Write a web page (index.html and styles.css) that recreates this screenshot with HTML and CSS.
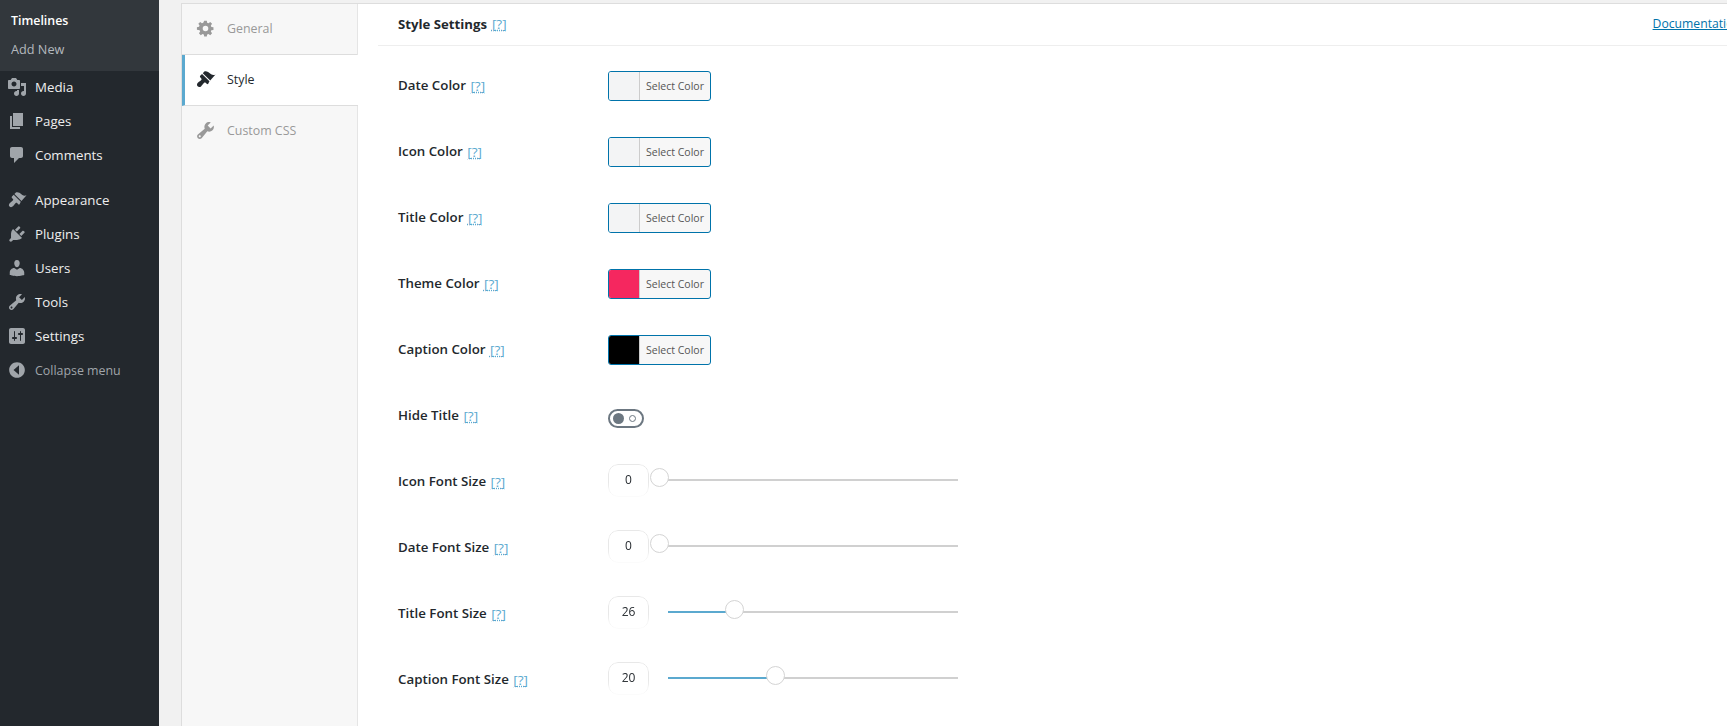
FILE: index.html
```html
<!DOCTYPE html>
<html lang="en">
<head>
    <meta charset="UTF-8">
    <meta name="viewport" content="width=device-width, initial-scale=1.0">
    <title>Style Settings</title>
    <link rel="stylesheet" href="styles.css">
</head>
<body>
    <aside class="sidebar">
        <div class="submenu">
            <a class="submenu-current">Timelines</a>
            <a class="submenu-item">Add New</a>
        </div>
        <nav class="menu">
            <a class="menu-item">
                <svg class="menu-icon" viewBox="0 0 20 20"><path d="M13 11V4c0-.55-.45-1-1-1h-1.67L9 1H5L3.67 3H2c-.55 0-1 .45-1 1v7c0 .55.45 1 1 1h10c.55 0 1-.45 1-1zM7 4.500c1.380 0 2.500 1.120 2.500 2.500S8.380 9.500 7 9.500 4.500 8.380 4.500 7 5.620 4.500 7 4.500zM14 6h5v10.500c0 1.380-1.120 2.500-2.500 2.500S14 17.880 14 16.500s1.120-2.500 2.500-2.500c.17 0 .34.02.5.05V9h-3V6zm-4 8.050V13h2v3.500c0 1.380-1.120 2.500-2.500 2.500S7 17.880 7 16.500 8.120 14 9.500 14c.17 0 .34.02.5.05z"/></svg>
                Media
            </a>
            <a class="menu-item">
                <svg class="menu-icon" viewBox="0 0 20 20"><path d="M6 15V2h10v13H6zm-1 1h8v2H3V5h2v11z"/></svg>
                Pages
            </a>
            <a class="menu-item">
                <svg class="menu-icon" viewBox="0 0 20 20"><path d="M5 2h9c1.100 0 2 .9 2 2v7c0 1.100-.9 2-2 2h-2l-5 5v-5H5c-1.100 0-2-.9-2-2V4c0-1.100.9-2 2-2z"/></svg>
                Comments
            </a>
            <a class="menu-item menu-item-gap">
                <svg class="menu-icon" viewBox="0 0 20 20"><path d="M14.480 11.060L7.410 3.990l1.500-1.500c.5-.56 2.300-.47 3.510.32 1.210.8 1.430 1.280 2.910 2.100 1.180.64 2.450 1.260 4.150.33l-.15.15-4.850 5.660zm-.71.71L6.700 4.700 4.930 6.470c-.39.39-.39 1.020 0 1.410l1.060 1.060c.39.39.39 1.030 0 1.420-.6.6-1.430 1.150-2.210 1.840-.35.31-.72.6-1.060.94-.89.88-1.200 2.400-.2 3.400s2.530.69 3.410-.2c.34-.34.63-.71.94-1.060.69-.78 1.240-1.610 1.840-2.210.39-.39 1.030-.39 1.420 0l1.060 1.060c.39.39 1.020.39 1.410 0z"/></svg>
                Appearance
            </a>
            <a class="menu-item">
                <svg class="menu-icon" viewBox="0 0 20 20"><path d="M13.110 4.360L9.870 7.600 8 5.730l3.240-3.240c.35-.34 1.050-.2 1.560.32.52.51.66 1.210.31 1.550zm-8 1.770l.91-1.120 9.010 9.010-1.190.84c-.71.71-2.630 1.160-3.820 1.160H6.140L4.900 17.260c-.59.59-1.540.59-2.120 0-.59-.58-.59-1.530 0-2.120l1.240-1.240v-3.880c0-1.130.4-3.190 1.090-3.890zm7.260 3.970l3.240-3.240c.34-.35 1.040-.21 1.550.31.52.51.66 1.210.31 1.550l-3.240 3.250z"/></svg>
                Plugins
            </a>
            <a class="menu-item">
                <svg class="menu-icon" viewBox="0 0 20 20"><path d="M10 9.250c-2.270 0-2.730-3.440-2.730-3.440C7 4.020 7.820 2 9.970 2c2.160 0 2.980 2.020 2.710 3.810 0 0-.41 3.440-2.680 3.440zm0 2.570L12.720 10c2.390 0 4.520 2.330 4.520 4.530v2.490s-3.650 1.130-7.240 1.130c-3.650 0-7.240-1.130-7.240-1.130v-2.490c0-2.250 1.940-4.480 4.470-4.480z"/></svg>
                Users
            </a>
            <a class="menu-item">
                <svg class="menu-icon" viewBox="0 0 20 20"><path d="M16.680 9.770c-1.340 1.340-3.300 1.670-4.950.99l-5.410 6.520c-.99.99-2.590.99-3.580 0s-.99-2.590 0-3.570l6.520-5.420c-.68-1.650-.35-3.610.99-4.950 1.280-1.280 3.120-1.620 4.720-1.060l-2.890 2.890 2.820 2.820 2.860-2.870c.53 1.580.18 3.390-1.080 4.650zM3.810 16.210c.4.39 1.040.39 1.430 0 .4-.4.4-1.040 0-1.430-.39-.4-1.030-.4-1.430 0-.39.39-.39 1.030 0 1.430z"/></svg>
                Tools
            </a>
            <a class="menu-item">
                <svg class="menu-icon" viewBox="0 0 20 20"><path d="M18 16V4c0-1.100-.9-2-2-2H4c-1.100 0-2 .9-2 2v12c0 1.100.9 2 2 2h12c1.100 0 2-.9 2-2zM8 11h1c.55 0 1 .45 1 1s-.45 1-1 1H8v1.500c0 .28-.22.5-.5.5s-.5-.22-.5-.5V13H6c-.55 0-1-.45-1-1s.45-1 1-1h1V5.500c0-.28.22-.5.5-.5s.5.22.5.5V11zm5-2h-1c-.55 0-1-.45-1-1s.45-1 1-1h1V5.500c0-.28.22-.5.5-.5s.5.22.5.5V7h1c.55 0 1 .45 1 1s-.45 1-1 1h-1v5.500c0 .28-.22.5-.5.5s-.5-.22-.5-.5V9z"/></svg>
                Settings
            </a>
            <a class="menu-item menu-item-collapse">
                <svg class="menu-icon" viewBox="0 0 20 20"><path d="M10 2.160c4.330 0 7.840 3.510 7.840 7.840s-3.510 7.840-7.840 7.840-7.840-3.510-7.840-7.840 3.510-7.840 7.840-7.840zM12 14.830V5.170L6.500 10z"/></svg>
                Collapse menu
            </a>
        </nav>
    </aside>

    <main class="main">
        <div class="box">
            <div class="tabs">
                <a class="tab">
                    <svg class="tab-icon" viewBox="-2 -2 24 24"><path fill-rule="evenodd" d="M8.500 1h3l.4 2.400 1.500.6 2-1.400 2.100 2.100-1.400 2 .6 1.500 2.400.4v3l-2.400.4-.6 1.500 1.400 2-2.100 2.100-2-1.400-1.500.6-.4 2.400h-3l-.4-2.400-1.500-.6-2 1.400-2.100-2.100 1.400-2-.6-1.500L.2 11.500v-3l2.400-.4.6-1.500-1.400-2 2.100-2.100 2 1.400 1.500-.6zM10 6.800a3.200 3.200 0 1 0 0 6.400 3.200 3.200 0 0 0 0-6.400z"/></svg>
                    General
                </a>
                <a class="tab tab-active">
                    <svg class="tab-icon" viewBox="0 0 20 20"><path d="M14.480 11.060L7.410 3.990l1.500-1.500c.5-.56 2.300-.47 3.510.32 1.210.8 1.430 1.280 2.910 2.100 1.180.64 2.450 1.260 4.150.33l-.15.15-4.850 5.660zm-.71.71L6.700 4.700 4.930 6.470c-.39.39-.39 1.020 0 1.410l1.060 1.060c.39.39.39 1.030 0 1.420-.6.6-1.430 1.150-2.210 1.840-.35.31-.72.6-1.060.94-.89.88-1.200 2.400-.2 3.400s2.530.69 3.410-.2c.34-.34.63-.71.94-1.060.69-.78 1.240-1.610 1.840-2.210.39-.39 1.030-.39 1.420 0l1.060 1.060c.39.39 1.020.39 1.410 0z"/></svg>
                    Style
                </a>
                <a class="tab">
                    <svg class="tab-icon" viewBox="0 0 20 20"><path d="M16.680 9.770c-1.340 1.340-3.300 1.670-4.950.99l-5.410 6.520c-.99.99-2.590.99-3.580 0s-.99-2.590 0-3.570l6.520-5.420c-.68-1.650-.35-3.610.99-4.950 1.280-1.280 3.120-1.620 4.720-1.060l-2.890 2.890 2.820 2.820 2.860-2.870c.53 1.580.18 3.390-1.080 4.650zM3.810 16.210c.4.39 1.040.39 1.430 0 .4-.4.4-1.040 0-1.430-.39-.4-1.030-.4-1.430 0-.39.39-.39 1.030 0 1.430z"/></svg>
                    Custom CSS
                </a>
            </div>

            <div class="panel">
                <div class="panel-head">
                    <span class="panel-title">Style Settings</span>
                    <a class="help">[?]</a>
                    <a class="doc-link">Documentation</a>
                </div>

                <div class="row">
                    <label class="row-label">Date Color <a class="help">[?]</a></label>
                    <div class="color-btn"><span class="swatch"></span><span class="color-text">Select Color</span></div>
                </div>
                <div class="row">
                    <label class="row-label">Icon Color <a class="help">[?]</a></label>
                    <div class="color-btn"><span class="swatch"></span><span class="color-text">Select Color</span></div>
                </div>
                <div class="row">
                    <label class="row-label">Title Color <a class="help">[?]</a></label>
                    <div class="color-btn"><span class="swatch"></span><span class="color-text">Select Color</span></div>
                </div>
                <div class="row">
                    <label class="row-label">Theme Color <a class="help">[?]</a></label>
                    <div class="color-btn"><span class="swatch swatch-theme"></span><span class="color-text">Select Color</span></div>
                </div>
                <div class="row">
                    <label class="row-label">Caption Color <a class="help">[?]</a></label>
                    <div class="color-btn"><span class="swatch swatch-caption"></span><span class="color-text">Select Color</span></div>
                </div>
                <div class="row">
                    <label class="row-label">Hide Title <a class="help">[?]</a></label>
                    <div class="toggle"><span class="toggle-knob"></span><span class="toggle-dot"></span></div>
                </div>
                <div class="row">
                    <label class="row-label">Icon Font Size <a class="help">[?]</a></label>
                    <div class="slider-wrap">
                        <span class="slider-value">0</span>
                        <div class="slider slider-empty"><span class="slider-thumb"></span></div>
                    </div>
                </div>
                <div class="row">
                    <label class="row-label">Date Font Size <a class="help">[?]</a></label>
                    <div class="slider-wrap">
                        <span class="slider-value">0</span>
                        <div class="slider slider-empty"><span class="slider-thumb"></span></div>
                    </div>
                </div>
                <div class="row">
                    <label class="row-label">Title Font Size <a class="help">[?]</a></label>
                    <div class="slider-wrap">
                        <span class="slider-value">26</span>
                        <div class="slider"><span class="slider-fill" style="width: 58px"></span><span class="slider-thumb"></span></div>
                    </div>
                </div>
                <div class="row">
                    <label class="row-label">Caption Font Size <a class="help">[?]</a></label>
                    <div class="slider-wrap">
                        <span class="slider-value">20</span>
                        <div class="slider"><span class="slider-fill" style="width: 99px"></span><span class="slider-thumb"></span></div>
                    </div>
                </div>
            </div>
        </div>
    </main>
</body>
</html>
```

FILE: styles.css
```css
* {
    box-sizing: border-box;
    margin: 0;
    padding: 0;
}

body {
    font-family: 'Open Sans', sans-serif;
    display: flex;
    height: 726px;
    overflow: hidden;
    background: #f1f1f1;
    color: #23282d;
}

.sidebar {
    width: 159px;
    flex-shrink: 0;
    background: #23282d;
}

.submenu {
    height: 71px;
    padding-top: 10px;
    background: #32373c;
    font-size: 12.7px;
}

.submenu a {
    display: block;
    height: 28px;
    line-height: 22px;
    padding-left: 11px;
}

.submenu-current {
    color: #fff;
    font-weight: 600;
    font-size: 12.4px;
}

.submenu-item {
    color: #b4b9be;
}

.menu {
    margin-top: -1px;
}

.menu-item {
    display: flex;
    align-items: center;
    height: 34px;
    padding-left: 7px;
    font-size: 13.3px;
    color: #eee;
}

.menu-item-gap {
    margin-top: 11px;
}

.menu-item-collapse {
    font-size: 12.4px;
    color: #a0a5aa;
}

.menu-icon {
    width: 20px;
    height: 20px;
    margin-right: 8px;
    fill: #a0a5aa;
    flex-shrink: 0;
}

.main {
    flex: 1;
    min-width: 0;
    padding: 3px 0 0 22px;
    overflow: hidden;
}

.box {
    display: flex;
    width: 1586px;
    min-height: 800px;
    background: #fff;
    border-top: 1px solid #ddd;
    border-left: 1px solid #ddd;
}

.tabs {
    width: 176px;
    flex-shrink: 0;
    background: #f7f7f7;
    border-right: 1px solid #e5e5e5;
}

.tab {
    display: flex;
    align-items: center;
    height: 51px;
    padding-left: 13px;
    padding-bottom: 2px;
    font-size: 12.4px;
    color: #999;
    border-bottom: 1px solid #ddd;
}

.tab:last-child {
    border-bottom-color: transparent;
}

.tab-active {
    margin-right: -1px;
    padding-left: 10px;
    background: #fff;
    color: #23282d;
    border-left: 3px solid #5ba9cf;
}

.tab-icon {
    width: 21px;
    height: 21px;
    margin-right: 11px;
    fill: #999;
}

.tab-active .tab-icon {
    fill: #23282d;
}

.panel {
    flex: 1;
    padding: 0 0 0 20px;
}

.panel-head {
    display: flex;
    align-items: center;
    height: 42px;
    padding-left: 20px;
    padding-bottom: 2px;
    border-bottom: 1px solid #eee;
    margin-bottom: 7px;
}

.panel-title {
    font-size: 13.2px;
    font-weight: 700;
    color: #23282d;
    margin-right: 5px;
}

.help {
    font-size: 13.5px;
    color: #5ba9cf;
    text-decoration: underline dotted;
    font-weight: 400;
    vertical-align: -1px;
}

.doc-link {
    margin-left: auto;
    margin-right: 26px;
    font-size: 12.2px;
    color: #0073aa;
    text-decoration: underline;
}

.row {
    display: flex;
    align-items: center;
    height: 66px;
    padding-left: 20px;
}

.row-label {
    width: 210px;
    flex-shrink: 0;
    margin-top: -2px;
    font-size: 13.3px;
    font-weight: 600;
    color: #23282d;
}

.row-label .help {
    margin-left: 1px;
}

.color-btn {
    display: flex;
    width: 103px;
    height: 30px;
    border: 1px solid #0073aa;
    border-radius: 3px;
    background: #f7f7f7;
    overflow: hidden;
}

.swatch {
    width: 31px;
    background: #f3f4f5;
    border-right: 1px solid #ccc;
}

.swatch-theme {
    background: #f5275f;
}

.swatch-caption {
    background: #000;
}

.color-text {
    flex: 1;
    font-size: 10.5px;
    line-height: 28px;
    text-align: center;
    color: #555;
}

.toggle {
    display: flex;
    align-items: center;
    justify-content: space-between;
    width: 36px;
    height: 19px;
    margin-top: 4px;
    padding: 0 6px 0 3px;
    border: 2px solid #6c7781;
    border-radius: 10px;
}

.toggle-knob {
    width: 11px;
    height: 11px;
    border-radius: 50%;
    background: #6c7781;
}

.toggle-dot {
    width: 7px;
    height: 7px;
    border: 1.5px solid #6c7781;
    border-radius: 50%;
}

.slider-wrap {
    display: flex;
    align-items: center;
    width: 350px;
    margin-top: 4px;
    margin-bottom: 8px;
}

.slider-value {
    width: 41px;
    height: 33px;
    flex-shrink: 0;
    font-size: 12px;
    line-height: 29px;
    text-align: center;
    border: 1px solid #e8e8e8;
    border-radius: 10px;
    mask-image: linear-gradient(#000 55%, rgba(0, 0, 0, 0.15));
}

.slider {
    display: flex;
    align-items: center;
    flex: 1;
    height: 2px;
    margin-left: 19px;
    background: #d0d0d0;
}

.slider-fill {
    height: 2px;
    background: #5ba9cf;
}

.slider-thumb {
    width: 19px;
    height: 19px;
    flex-shrink: 0;
    margin-top: -6px;
    margin-left: -1px;
    border: 1px solid #d4d4d4;
    border-radius: 50%;
    background: #fff;
}

.slider-empty .slider-thumb {
    margin-left: -18px;
}
```
